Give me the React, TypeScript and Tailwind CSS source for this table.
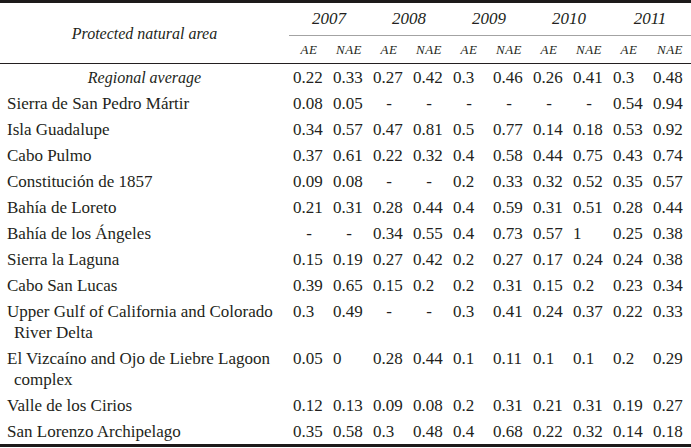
import React from "react";

const years = ["2007", "2008", "2009", "2010", "2011"];

type Row = { name: React.ReactNode; vals: string[]; avg?: boolean };

const rows: Row[] = [
  { name: "Regional average", vals: ["0.22", "0.33", "0.27", "0.42", "0.3", "0.46", "0.26", "0.41", "0.3", "0.48"], avg: true },
  { name: "Sierra de San Pedro Mártir", vals: ["0.08", "0.05", "-", "-", "-", "-", "-", "-", "0.54", "0.94"] },
  { name: "Isla Guadalupe", vals: ["0.34", "0.57", "0.47", "0.81", "0.5", "0.77", "0.14", "0.18", "0.53", "0.92"] },
  { name: "Cabo Pulmo", vals: ["0.37", "0.61", "0.22", "0.32", "0.4", "0.58", "0.44", "0.75", "0.43", "0.74"] },
  { name: "Constitución de 1857", vals: ["0.09", "0.08", "-", "-", "0.2", "0.33", "0.32", "0.52", "0.35", "0.57"] },
  { name: "Bahía de Loreto", vals: ["0.21", "0.31", "0.28", "0.44", "0.4", "0.59", "0.31", "0.51", "0.28", "0.44"] },
  { name: "Bahía de los Ángeles", vals: ["-", "-", "0.34", "0.55", "0.4", "0.73", "0.57", "1", "0.25", "0.38"] },
  { name: "Sierra la Laguna", vals: ["0.15", "0.19", "0.27", "0.42", "0.2", "0.27", "0.17", "0.24", "0.24", "0.38"] },
  { name: "Cabo San Lucas", vals: ["0.39", "0.65", "0.15", "0.2", "0.2", "0.31", "0.15", "0.2", "0.23", "0.34"] },
  {
    name: (
      <>
        Upper Gulf of California and Colorado
        <br />
        River Delta
      </>
    ),
    vals: ["0.3", "0.49", "-", "-", "0.3", "0.41", "0.24", "0.37", "0.22", "0.33"],
  },
  {
    name: (
      <>
        El Vizcaíno and Ojo de Liebre Lagoon
        <br />
        complex
      </>
    ),
    vals: ["0.05", "0", "0.28", "0.44", "0.1", "0.11", "0.1", "0.1", "0.2", "0.29"],
  },
  { name: "Valle de los Cirios", vals: ["0.12", "0.13", "0.09", "0.08", "0.2", "0.31", "0.21", "0.31", "0.19", "0.27"] },
  { name: "San Lorenzo Archipelago", vals: ["0.35", "0.58", "0.3", "0.48", "0.4", "0.68", "0.22", "0.32", "0.14", "0.18"] },
];

export default function App() {
  return (
    <div className="w-[691px] h-[448px] bg-white text-[#231f20] [font-family:'Liberation_Serif',serif]">
      <div className="border-t-[3px] border-b-[3px] border-[#1c1a1a]">
        <table className="w-[691px] table-fixed border-separate border-spacing-0">
          <colgroup>
            <col className="w-[289px]" />
            <col className="w-[40px]" />
            <col className="w-[40px]" />
            <col className="w-[40px]" />
            <col className="w-[40px]" />
            <col className="w-[40px]" />
            <col className="w-[40px]" />
            <col className="w-[40px]" />
            <col className="w-[40px]" />
            <col className="w-[40px]" />
            <col className="w-[42px]" />
          </colgroup>
          <thead>
            <tr>
              <th
                rowSpan={2}
                className="border-b border-[#231f20] p-0 pt-[2px] text-center align-middle text-[16px] font-normal italic leading-[20px]"
              >
                Protected natural area
              </th>
              {years.map((y) => (
                <th
                  key={y}
                  colSpan={2}
                  className="h-[33px] border-b border-[#a3a3a3] p-0 text-center align-middle text-[17px] font-normal italic leading-[20px]"
                >
                  {y}
                </th>
              ))}
            </tr>
            <tr>
              {years.flatMap((y) =>
                ["AE", "NAE"].map((h) => (
                  <th
                    key={y + h}
                    className="h-[28px] border-b border-[#231f20] p-0 pt-[1px] text-center align-middle text-[13px] font-normal italic tracking-[0.5px] leading-[14px]"
                  >
                    {h}
                  </th>
                ))
              )}
            </tr>
          </thead>
          <tbody>
            {rows.map((r, i) => (
              <tr key={i}>
                {r.avg ? (
                  <td className="pt-[3px] pb-[2px] text-center align-top text-[16px] italic leading-[21px]">
                    {r.name}
                  </td>
                ) : (
                  <td className="whitespace-nowrap pl-[14px] -indent-[7px] pt-[3px] pb-[2px] align-top text-[17px] leading-[21px]">
                    {r.name}
                  </td>
                )}
                {r.vals.map((v, j) =>
                  v === "-" ? (
                    <td key={j} className="pt-[3px] pb-[2px] text-center align-top text-[17px] leading-[21px]">
                      -
                    </td>
                  ) : (
                    <td key={j} className="whitespace-nowrap pl-[4px] pt-[3px] pb-[2px] align-top text-[17px] leading-[21px]">
                      {v}
                    </td>
                  )
                )}
              </tr>
            ))}
          </tbody>
        </table>
      </div>
    </div>
  );
}
